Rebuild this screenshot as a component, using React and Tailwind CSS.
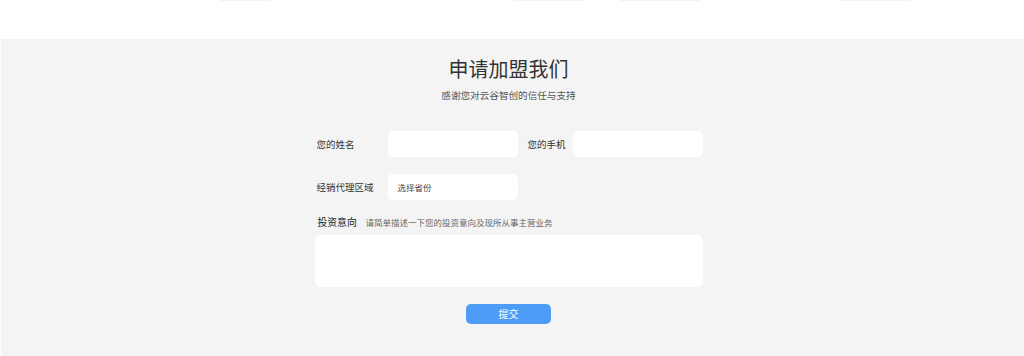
const Field = ({ className = "" }) => (
    <input
        type="text"
        className={`h-[26px] w-[130px] rounded-[5px] bg-white px-2 text-[10px] outline-none ${className}`}
    />
);

const App = () => {
    const font = { fontFamily: '"Noto Sans CJK SC", "Noto Sans", sans-serif' };

    return (
        <div className="w-[1024px] h-[356px] bg-white flex flex-col overflow-hidden" style={font}>
            {/* 顶部残留图片 */}
            <div className="h-[39px] relative">
                <div className="absolute top-0 left-[220px] w-[50px] h-px bg-[#faf0f0]" />
                <div className="absolute top-0 left-[515px] w-[70px] h-px bg-[#f3f3fa]" />
                <div className="absolute top-0 left-[620px] w-[80px] h-px bg-[#f0f3fb]" />
                <div className="absolute top-0 left-[840px] w-[70px] h-px bg-[#faf0f0]" />
            </div>

            {/* 申请加盟 */}
            <div className="flex-1 ml-px bg-[#f4f4f4] flex justify-center pr-[8px]">
                <div className="w-[388px] flex flex-col pt-[19px]">
                    <h2 className="h-[22px] leading-[22px] text-[20px] text-center text-[#333]">
                        申请加盟我们
                    </h2>
                    <p className="mt-[9px] h-[12px] leading-[12px] text-[9.6px] text-center text-[#555]">
                        感谢您对云谷智创的信任与支持
                    </p>

                    <div className="mt-[30px] flex items-center">
                        <span className="w-[73px] pl-[2px] text-[9.5px] text-[#333]">您的姓名</span>
                        <Field />
                        <span className="ml-[10px] w-[45px] text-[9.5px] text-[#333]">您的手机</span>
                        <Field />
                    </div>

                    <div className="mt-[17px] flex items-center">
                        <span className="w-[73px] pl-[2px] text-[9.5px] text-[#333]">经销代理区域</span>
                        <div className="h-[26px] w-[130px] rounded-[5px] bg-white pl-[10px] flex items-center text-[8.5px] text-[#444]">
                            选择省份
                        </div>
                    </div>

                    <div className="mt-[16px] h-[12px] flex items-center pl-[3px]">
                        <span className="w-[48px] text-[9.8px] text-[#222]">投资意向</span>
                        <span className="text-[8.5px] text-[#666]">请简单描述一下您的投资意向及现所从事主营业务</span>
                    </div>

                    <textarea className="mt-[7px] h-[52px] w-[388px] rounded-[6px] bg-white resize-none outline-none p-2 text-[10px]" />

                    <div className="mt-[17px] flex justify-center">
                        <button className="h-[20px] w-[85px] rounded-[5px] bg-[#4c9cf6] text-white text-[10px] leading-[20px]">
                            提交
                        </button>
                    </div>
                </div>
            </div>
        </div>
    );
};

export default App;
